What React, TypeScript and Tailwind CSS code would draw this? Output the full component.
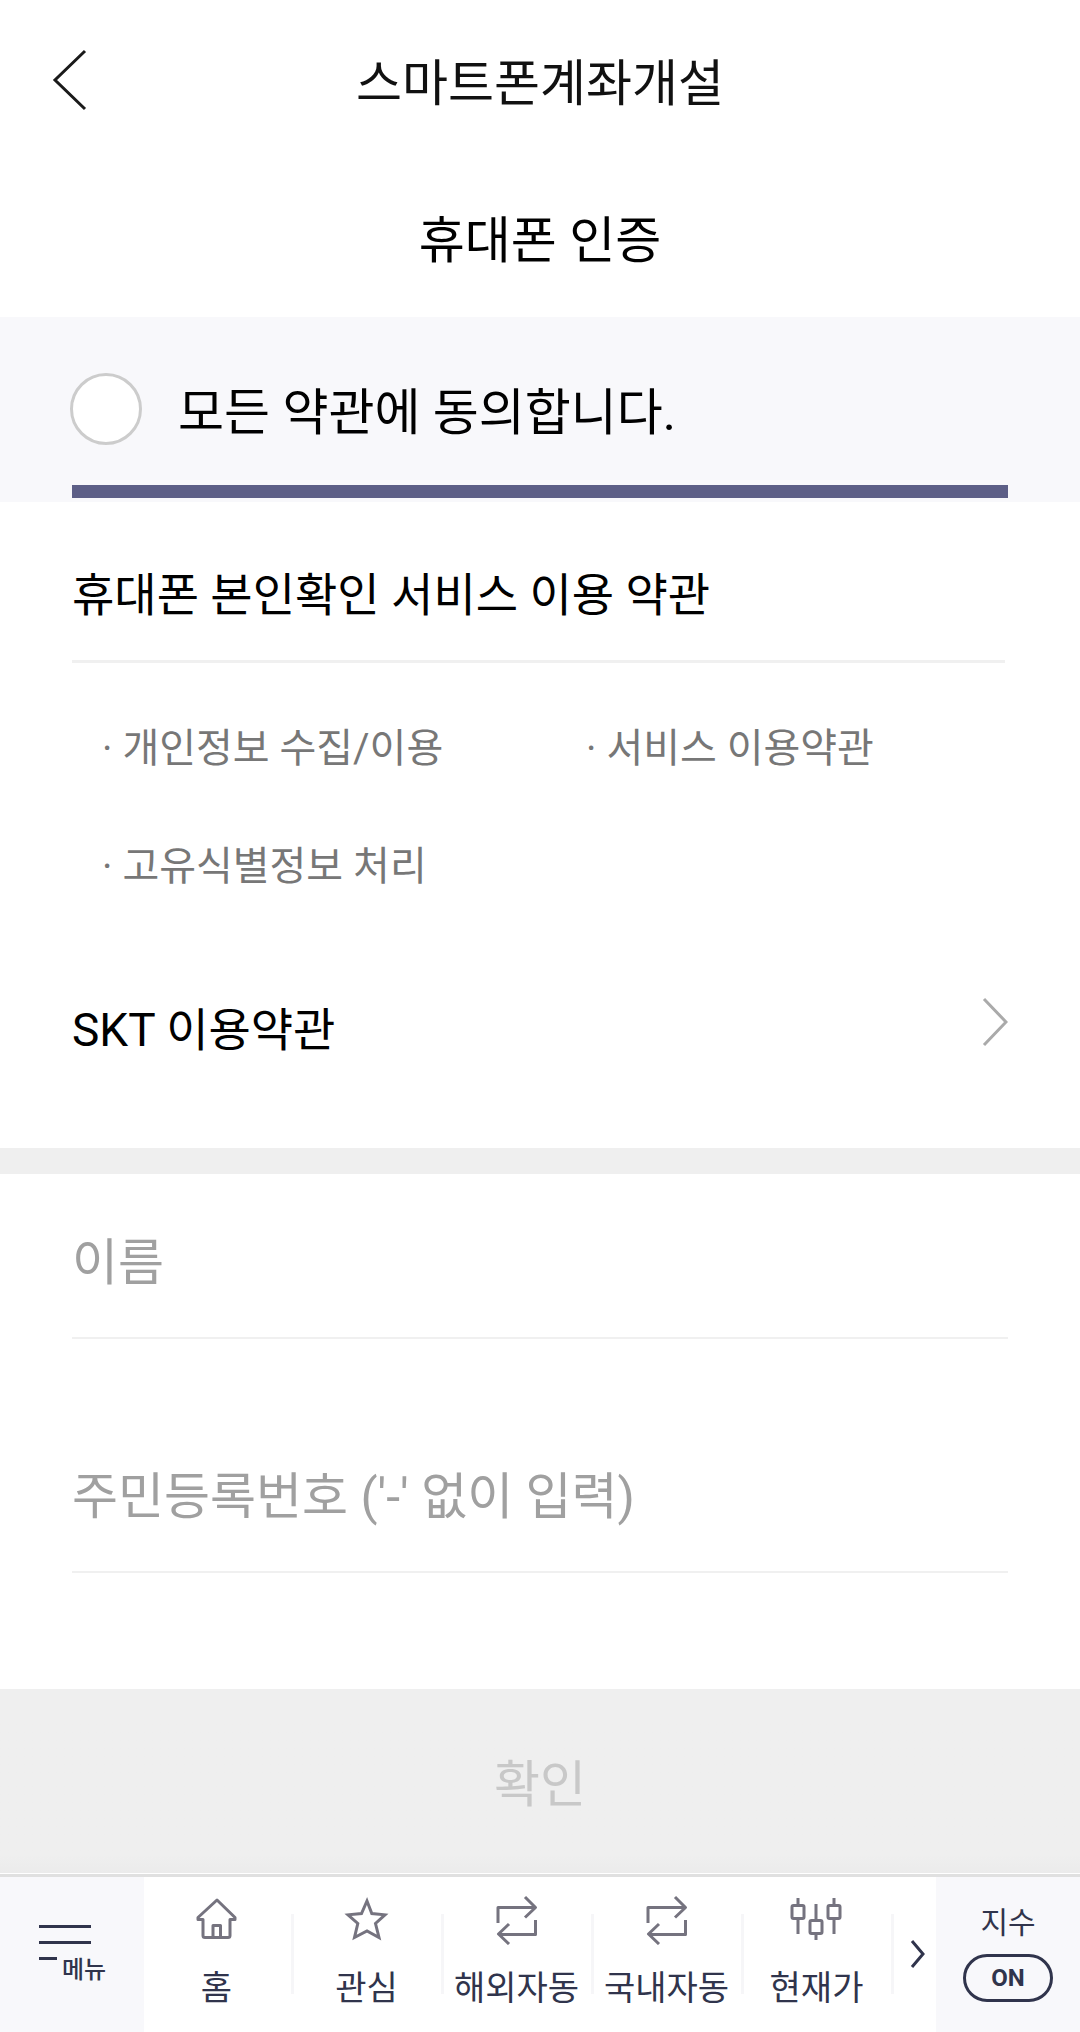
import { useState } from "react"
import type { ReactNode } from "react"

function HomeIcon() {
  return (
    <svg width="48" height="54" viewBox="0 0 48 54" fill="none" stroke="#75737f" strokeWidth="3" strokeLinejoin="round" strokeLinecap="round">
      <path d="M24 9 L42 26.5 V28.5 H37 V44.5 Q37 46.5 35 46.5 H12 Q10 46.5 10 44.5 V28.5 H5 V26.5 Z" />
      <path d="M20 46 V34.5 H27.5 V46" />
    </svg>
  )
}

function StarIcon() {
  return (
    <svg width="48" height="54" viewBox="0 0 48 54" fill="none" stroke="#75737f" strokeWidth="3">
      <path d="M24 10 L28.8 22.5 L42 23.8 L32.5 32.5 L36 46.5 L24 40 L11.5 46.5 L14.8 32.5 L5 23.8 L18.5 22.5 Z" />
    </svg>
  )
}

function RepeatIcon() {
  return (
    <svg width="48" height="54" viewBox="0 0 48 54" fill="none" stroke="#75737f" strokeWidth="3" strokeLinejoin="round">
      <path d="M5 32 V16.5 H42" />
      <path d="M32 6 L42.5 16.5 L32 26.5" />
      <path d="M42.5 29 V43.5 H6" />
      <path d="M16 33 L5.5 43 L16 53" />
    </svg>
  )
}

function CandleIcon() {
  return (
    <svg width="54" height="54" viewBox="0 0 54 54" fill="none" stroke="#75737f" strokeWidth="3" strokeLinejoin="round">
      <path d="M8 7 V14 M8 28 V43 M26 13 V29 M26 42 V49 M44 7 V14 M44 28 V43" />
      <rect x="2" y="14.5" width="12" height="13" rx="1.5" />
      <rect x="20" y="29.5" width="12" height="13" rx="1.5" />
      <rect x="38" y="14.5" width="12" height="13" rx="1.5" />
    </svg>
  )
}

const terms = ["개인정보 수집/이용", "서비스 이용약관", "고유식별정보 처리"]

const tabs: { label: string; icon: ReactNode }[] = [
  { label: "홈", icon: <HomeIcon /> },
  { label: "관심", icon: <StarIcon /> },
  { label: "해외자동", icon: <RepeatIcon /> },
  { label: "국내자동", icon: <RepeatIcon /> },
  { label: "현재가", icon: <CandleIcon /> },
]

export default function App() {
  const [agreed, setAgreed] = useState(false)
  const [name, setName] = useState("")
  const [regNumber, setRegNumber] = useState("")

  return (
    <div className="flex min-h-screen flex-col bg-white font-['Roboto','Noto_Sans_CJK_KR',sans-serif] text-black">
      <header className="grid h-40 grid-cols-[144px_1fr_144px] items-center">
        <button type="button" aria-label="뒤로" className="flex h-full items-center pl-13">
          <svg width="36" height="62" viewBox="0 0 36 62" fill="none" stroke="#1a1a1a" strokeWidth="3">
            <path d="M33 2 L3 31 L33 60" />
          </svg>
        </button>
        <h1 className="pt-2 text-center text-[50px] leading-[72px] text-[#111111]">스마트폰계좌개설</h1>
      </header>

      <main className="flex grow flex-col">
        <h2 className="pt-[45px] pb-10 text-center text-[50px] leading-[72px]">휴대폰 인증</h2>

        <section className="bg-[#f8f8fb] px-[70px] pb-1">
          <label className="flex items-center gap-9 pt-13 pb-9 text-[50px] leading-[72px]">
            <input
              type="checkbox"
              checked={agreed}
              onChange={(e) => setAgreed(e.target.checked)}
              className="size-[72px] appearance-none rounded-full border-3 border-[#cccccc] bg-white checked:bg-[#5d5f87]"
            />
            <span className="pt-2">모든 약관에 동의합니다.</span>
          </label>
          <div className="mx-0.5 h-[13px] bg-[#5d5f87]"></div>
        </section>

        <section className="px-18">
          <h3 className="mr-[3px] border-b-3 border-[#f0f0f0] pt-[60px] pb-8 text-[46px] leading-[66px]">
            휴대폰 본인확인 서비스 이용 약관
          </h3>
          <ul className="grid grid-cols-[484px_1fr] gap-y-[58px] pt-14 pl-[30px] text-[40px] leading-[60px] text-[#777777]">
            {terms.map((term) => (
              <li key={term}>
                <a href="#">· {term}</a>
              </li>
            ))}
          </ul>
          <a href="#" className="flex items-start justify-between pt-25 pb-[85px] text-[46px] leading-[66px]">
            SKT 이용약관
            <svg width="26" height="50" viewBox="0 0 26 50" fill="none" stroke="#aaaaaa" strokeWidth="3">
              <path d="M2 2 L24 25 L2 48" />
            </svg>
          </a>
        </section>

        <div className="h-[26px] bg-[#efefef]"></div>

        <form className="flex grow flex-col">
          <div className="flex grow flex-col gap-20 px-18 pt-[11px] pb-28">
            <input
              type="text"
              aria-label="이름"
              placeholder="이름"
              value={name}
              onChange={(e) => setName(e.target.value)}
              className="h-[154px] w-full border-b-2 border-[#f0f0f0] pt-1 text-[50px] outline-none placeholder:text-[#a0a0a0]"
            />
            <input
              type="text"
              inputMode="numeric"
              aria-label="주민등록번호"
              placeholder="주민등록번호 ('-' 없이 입력)"
              value={regNumber}
              onChange={(e) => setRegNumber(e.target.value)}
              className="h-[154px] w-full border-b-2 border-[#f0f0f0] pt-1 text-[50px] outline-none placeholder:text-[#a0a0a0]"
            />
          </div>
          <button
            type="submit"
            disabled
            className="h-[184px] bg-linear-to-b from-[#efefef] from-90% to-[#ebebeb] pt-2 text-[50px] text-[#c8c8c8]"
          >
            확인
          </button>
        </form>
      </main>

      <nav className="mt-px flex h-[158px] border-t-3 border-[#e0e0e0] text-[#30344c]">
        <button type="button" className="flex w-36 flex-col bg-[#f8f8fb] pt-12 pl-[39px] text-[24px] leading-[26px] font-medium">
          <svg width="52" height="20" viewBox="0 0 52 20" stroke="#30344c" strokeWidth="3">
            <path d="M0 1.5 H52 M0 17.5 H52" />
          </svg>
          <span className="flex gap-[5px] pt-3">
            <span className="h-[3px] w-[18px] bg-[#30344c]"></span>
            <span>메뉴</span>
          </span>
        </button>
        <div className="flex grow items-center">
          {tabs.map((tab) => (
            <div key={tab.label} className="flex h-full grow basis-0 items-center">
              <a href="#" className="flex h-full grow flex-col items-center pt-3.5 pr-0.5 text-[34px] leading-[50px] whitespace-nowrap">
                {tab.icon}
                <span className="pt-[18px]">{tab.label}</span>
              </a>
              <span className="mb-0.5 h-20 w-[3px] bg-[#f6f6f8]"></span>
            </div>
          ))}
          <button type="button" aria-label="다음" className="flex h-full w-[42px] items-center justify-end pr-2.5 pb-0.5">
            <svg width="16" height="30" viewBox="0 0 16 30" fill="none" stroke="#30344c" strokeWidth="3">
              <path d="M2 2 L13 15 L2 28" />
            </svg>
          </button>
        </div>
        <div className="flex w-36 flex-col items-center bg-[#f8f8fb] pt-6">
          <span className="text-[30px] leading-[44px]">지수</span>
          <button
            type="button"
            aria-label="지수 ON"
            className="mt-[9px] h-12 w-[90px] rounded-full border-3 border-[#30344c] text-[24px] leading-6 font-bold"
          >
            ON
          </button>
        </div>
      </nav>
    </div>
  )
}
